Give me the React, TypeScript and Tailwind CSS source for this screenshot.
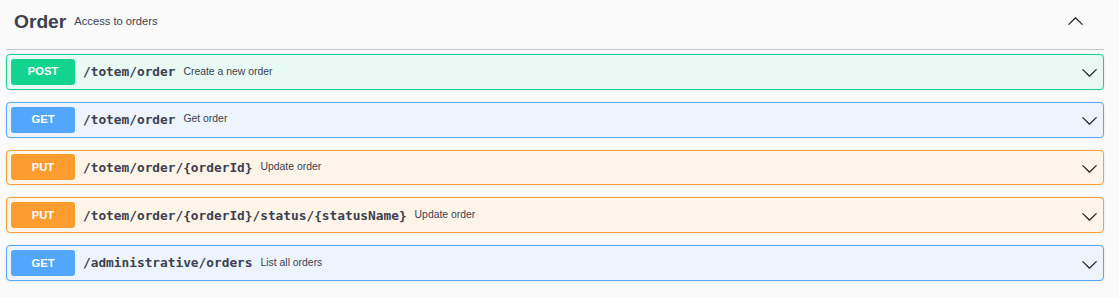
import React from "react";

type Op = { method: string; path: string; desc: string };

const ops: Op[] = [
  { method: "POST", path: "/totem/order", desc: "Create a new order" },
  { method: "GET", path: "/totem/order", desc: "Get order" },
  { method: "PUT", path: "/totem/order/{orderId}", desc: "Update order" },
  { method: "PUT", path: "/totem/order/{orderId}/status/{statusName}", desc: "Update order" },
  { method: "GET", path: "/administrative/orders", desc: "List all orders" },
];

const styles: Record<string, { block: string; badge: string }> = {
  POST: { block: "border-[#13d48e] bg-[#e8faf3]", badge: "bg-[#13d48e]" },
  GET: { block: "border-[#56a8fc] bg-[#edf4fe]", badge: "bg-[#52a6fd]" },
  PUT: { block: "border-[#fd9f31] bg-[#fff4e8]", badge: "bg-[#fd9d2f]" },
};

const Chevron = ({ up }: { up?: boolean }) => (
  <svg width="17" height="17" viewBox="0 0 20 20" className={up ? "rotate-180" : ""} fill="#222">
    <path d="M17.418 6.109c.272-.268.709-.268.979 0s.271.701 0 .969l-7.908 7.83c-.27.268-.707.268-.979 0l-7.908-7.83c-.27-.268-.27-.701 0-.969.271-.268.709-.268.979 0L10 13.25l7.418-7.141z" />
  </svg>
);

export default function App() {
  return (
    <div className="w-[1119px] h-[297px] bg-[#fafafa] text-[#3b4151]" style={{ fontFamily: '"Liberation Sans", Arial, sans-serif' }}>
      <div className="ml-[6px] w-[1098px]">
        <div className="h-[50px] border-b border-[#c4c6cb] flex items-start pl-[8px] pr-[20px]">
          <div className="h-[42px] pt-[1px] flex items-center w-full">
            <span className="text-[19.2px] font-bold leading-none">Order</span>
            <span className="text-[11.2px] ml-[8px]">Access to orders</span>
            <span className="ml-auto flex items-center">
              <Chevron up />
            </span>
          </div>
        </div>
        <div className="mt-[4px] flex flex-col gap-[12px]">
          {ops.map((op, i) => {
            const s = styles[op.method];
            return (
              <div key={i} className={`h-[35.8px] border rounded-[4px] flex items-center px-[4px] ${s.block}`} style={{ boxShadow: "0 0 2px rgba(0,0,0,0.12)" }}>
                <div className={`w-[64px] h-[26px] rounded-[3px] flex items-center justify-center text-white font-bold text-[11.2px] ${s.badge}`}>
                  {op.method}
                </div>
                <span className="ml-[8px] font-bold text-[12.8px]" style={{ fontFamily: '"DejaVu Sans Mono", monospace' }}>
                  {op.path}
                </span>
                <span className="ml-[8px] text-[10.4px] -mt-[1px]">{op.desc}</span>
                <span className="ml-auto mr-[1px] mt-[2px] flex items-center">
                  <Chevron />
                </span>
              </div>
            );
          })}
        </div>
      </div>
    </div>
  );
}
